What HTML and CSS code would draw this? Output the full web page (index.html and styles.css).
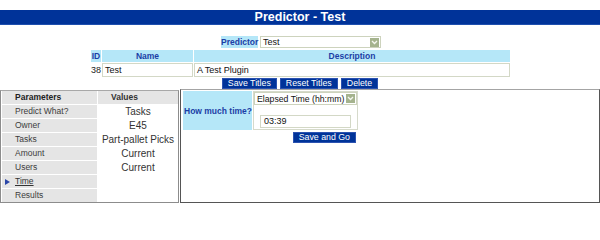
FILE: index.html
```html
<!DOCTYPE html>
<html>
<head>
<meta charset="utf-8">
<title>Predictor - Test</title>
<link rel="stylesheet" href="styles.css">
</head>
<body>
<div class="titlebar">Predictor - Test</div>

<div class="pred-row">
  <span class="label pred-label">Predictor</span>
  <div class="select sel-pred"><span class="sel-text">Test</span><span class="arrow"><svg width="7" height="5" viewBox="0 0 7 5"><path d="M1 1 L3.5 3.5 L6 1" fill="none" stroke="#f4f6ee" stroke-width="1.3"/></svg></span></div>
</div>

<div class="plugin-grid">
  <div class="hd">ID</div>
  <div class="hd">Name</div>
  <div class="hd">Description</div>
  <div class="id">38</div>
  <div class="inp">Test</div>
  <div class="inp">A Test Plugin</div>
</div>

<div class="btn-row">
  <span class="btn">Save Titles</span>
  <span class="btn">Reset Titles</span>
  <span class="btn">Delete</span>
</div>

<div class="main">
  <div class="params">
    <div class="pc phd">Parameters</div><div class="vc vhd">Values</div>
    <div class="pc">Predict What?</div><div class="vc">Tasks</div>
    <div class="pc">Owner</div><div class="vc">E45</div>
    <div class="pc">Tasks</div><div class="vc">Part-pallet Picks</div>
    <div class="pc">Amount</div><div class="vc">Current</div>
    <div class="pc">Users</div><div class="vc">Current</div>
    <div class="pc cur"><span class="tri"></span><span class="ulink">Time</span></div><div class="vc"></div>
    <div class="pc">Results</div><div class="vc"></div>
  </div>
  <div class="work">
    <div class="q-table">
      <div class="label q-label">How much time?</div>
      <div class="q-cell">
        <div class="select sel-time"><span class="sel-text">Elapsed Time (hh:mm)</span><span class="arrow"><svg width="7" height="5" viewBox="0 0 7 5"><path d="M1 1 L3.5 3.5 L6 1" fill="none" stroke="#f4f6ee" stroke-width="1.3"/></svg></span></div>
        <div class="inp time-inp">03:39</div>
      </div>
    </div>
    <div class="go-row"><span class="btn">Save and Go</span></div>
  </div>
</div>
</body>
</html>
```

FILE: styles.css
```css
* { box-sizing: border-box; }
body {
  margin: 0;
  padding-top: 10px;
  background: #ffffff;
  font-family: "Liberation Sans", Arial, sans-serif;
  font-size: 8.5px;
  color: #222;
}
.titlebar {
  height: 15px;
  line-height: 15px;
  background: #003399;
  color: #ffffff;
  font-weight: bold;
  font-size: 12.5px;
  text-align: center;
  border-bottom: 1px solid #1f4fae;
}
.label {
  background: #b5e7f8;
  color: #1b3ea6;
  font-weight: bold;
  font-size: 8.5px;
}
.pred-row {
  margin-top: 11px;
  display: flex;
  justify-content: center;
  gap: 2px;
  height: 12px;
  padding-left: 2px;
}
.pred-label {
  width: 37px;
  line-height: 12px;
  text-align: center;
}
.select {
  display: flex;
  align-items: center;
  justify-content: space-between;
  border: 1px solid #cdd3bd;
  background: #fff;
  padding: 0 1px 0 2px;
  color: #111;
  font-size: 9px;
}
.sel-pred { width: 121px; height: 12px; }
.sel-text { line-height: 10px; white-space: nowrap; }
.arrow {
  flex: none;
  width: 9px;
  height: 9px;
  background: #a5b38e;
  display: flex;
  align-items: center;
  justify-content: center;
}
.plugin-grid {
  margin-top: 2px;
  display: grid;
  grid-template-columns: 10px 91px 316px;
  grid-template-rows: 12px 14px;
  gap: 1px;
  justify-content: center;
  padding-left: 1px;
}
.hd {
  background: #b5e7f8;
  color: #1b3ea6;
  font-weight: bold;
  text-align: center;
  line-height: 12px;
}
.id {
  text-align: right;
  line-height: 14px;
  color: #222;
  font-size: 9px;
}
.inp {
  border: 1px solid #d3d8c6;
  background: #fff;
  line-height: 12px;
  padding-left: 2px;
  color: #111;
  font-size: 9px;
}
.btn-row {
  margin-top: 1px;
  display: flex;
  justify-content: center;
  gap: 3px;
  height: 11px;
}
.btn {
  display: inline-block;
  height: 11px;
  line-height: 9px;
  padding: 0 5px;
  background: #003399;
  color: #ffffff;
  border: 1px solid #2b52b0;
  font-size: 8.8px;
}
.main {
  display: flex;
  gap: 1px;
  align-items: flex-start;
}
.params {
  margin-top: 1px;
  width: 179px;
  height: 113px;
  border: 1px solid #8c8c8c;
  border-top-color: #a8a8a8;
  padding: 0 1px;
  display: grid;
  grid-template-columns: 95px 80px;
  grid-auto-rows: 13px;
  gap: 1px;
  background: #fff;
}
.pc {
  background: #e5e5e5;
  padding-left: 13px;
  line-height: 13px;
  color: #3c3c3c;
  font-size: 8.5px;
}
.phd {
  font-weight: bold;
  color: #222;
  font-size: 8.5px;
}
.vhd {
  background: #e5e5e5;
  font-weight: bold;
  color: #222;
  padding-left: 13px;
  text-align: left;
  font-size: 8.5px;
}
.vc {
  text-align: center;
  line-height: 13px;
  font-size: 10px;
  color: #333;
}
.vc.vhd { text-align: left; font-size: 8.5px; }
.cur {
  display: flex;
  align-items: center;
  padding-left: 3px;
}
.tri {
  width: 0;
  height: 0;
  border-left: 5px solid #2b46a8;
  border-top: 3px solid transparent;
  border-bottom: 3px solid transparent;
  margin-right: 5px;
}
.ulink { text-decoration: underline; color: #333; }
.work {
  flex: 1;
  height: 114px;
  border: 1px solid #555;
  border-top-color: #a4a4a4;
  padding: 1px;
}
.q-table {
  display: flex;
  gap: 1px;
  padding: 0 0 0 1px;
}
.q-label {
  width: 69px;
  height: 39px;
  display: flex;
  align-items: center;
  padding-left: 1px;
}
.q-cell {
  width: 105px;
  border: 1px solid #d6dacb;
  display: flex;
  flex-direction: column;
  align-items: flex-start;
}
.sel-time { width: 103px; height: 13px; font-size: 8.7px; }
.time-inp {
  margin-top: 10px;
  margin-left: 6px;
  width: 91px;
  height: 13px;
  line-height: 11px;
  padding-left: 3px;
}
.go-row {
  width: 176px;
  display: flex;
  justify-content: flex-end;
  padding-right: 2px;
  margin-top: 2px;
}
```
